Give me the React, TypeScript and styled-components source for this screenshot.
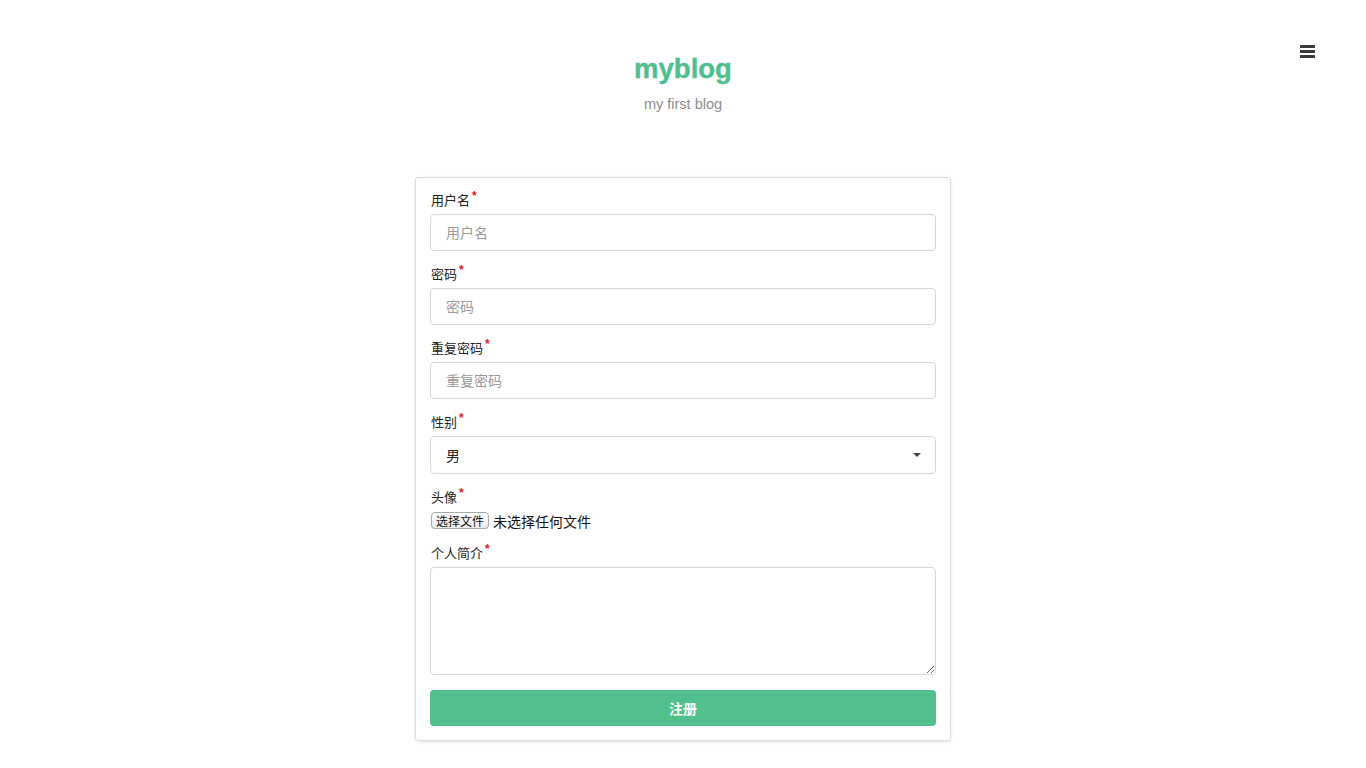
import styled, { createGlobalStyle } from 'styled-components';

const GlobalStyle = createGlobalStyle`
  body {
    margin: 0;
    background: #fff;
    font-family: "Liberation Sans", "Noto Sans CJK SC", sans-serif;
    color: #333;
  }
`;

const fields = [
  { label: '用户名', placeholder: '用户名', type: 'text' },
  { label: '密码', placeholder: '密码', type: 'password' },
  { label: '重复密码', placeholder: '重复密码', type: 'password' },
];

function BarsIcon() {
  return (
    <svg width="15" height="13" viewBox="0 0 15 13" fill="#3a3a3a">
      <rect x="0" y="0" width="15" height="3" rx="0.5" />
      <rect x="0" y="5" width="15" height="3" rx="0.5" />
      <rect x="0" y="10" width="15" height="3" rx="0.5" />
    </svg>
  );
}

export default function App() {
  return (
    <>
      <GlobalStyle />
      <Page>
        <MenuButton aria-label="menu">
          <BarsIcon />
        </MenuButton>

        <Header>
          <Title>myblog</Title>
          <Subtitle>my first blog</Subtitle>
        </Header>

        <Card>
          {fields.map((f) => (
            <Group key={f.label}>
              <Label>
                {f.label}
                <Star>*</Star>
              </Label>
              <Input type="text" placeholder={f.placeholder} />
            </Group>
          ))}

          <Group>
            <Label>
              性别<Star>*</Star>
            </Label>
            <SelectBox>
              <span>男</span>
              <Caret />
            </SelectBox>
          </Group>

          <Group>
            <Label>
              头像<Star>*</Star>
            </Label>
            <FileRow>
              <FileButton>选择文件</FileButton>
              <FileText>未选择任何文件</FileText>
            </FileRow>
          </Group>

          <Group>
            <Label>
              个人简介<Star>*</Star>
            </Label>
            <TextArea />
          </Group>

          <Submit>注册</Submit>
        </Card>
      </Page>
    </>
  );
}

const Page = styled.div`
  position: relative;
  min-height: 768px;
  display: flex;
  flex-direction: column;
  align-items: center;
  padding-top: 50px;
  box-sizing: border-box;
`;

const MenuButton = styled.div`
  position: absolute;
  top: 45px;
  right: 51px;
  display: flex;
`;

const Header = styled.div`
  display: flex;
  flex-direction: column;
  align-items: center;
`;

const Title = styled.h1`
  margin: 0;
  font-family: "Liberation Sans", Arial, sans-serif;
  font-size: 27.5px;
  line-height: 38px;
  font-weight: 700;
  color: #4fc08d;
  -webkit-text-stroke: 0.4px #4fc08d;
`;

const Subtitle = styled.div`
  margin-top: 6px;
  font-size: 14.5px;
  line-height: 20px;
  color: #8c8c8c;
`;

const Card = styled.div`
  margin-top: 63px;
  width: 536px;
  box-sizing: border-box;
  padding: 14px;
  border: 1px solid #dcdcdc;
  border-radius: 3px;
  box-shadow: 0 1px 3px rgba(0, 0, 0, 0.12);
  display: flex;
  flex-direction: column;
`;

const Group = styled.div`
  display: flex;
  flex-direction: column;
  margin-bottom: 15px;
`;

const Label = styled.label`
  font-size: 13px;
  line-height: 18px;
  color: #222;
  margin-bottom: 4px;
  padding-left: 1px;
`;

const Star = styled.sup`
  color: #e02020;
  font-size: 12px;
  font-weight: 700;
  line-height: 0;
  margin-left: 2px;
`;

const Input = styled.input`
  height: 37px;
  box-sizing: border-box;
  border: 1px solid #d6d6d6;
  border-radius: 4px;
  padding: 0 15px;
  font-family: inherit;
  font-size: 14px;
  color: #333;
  outline: none;
  &::placeholder {
    color: #9a9a9a;
  }
`;

const SelectBox = styled.div`
  height: 38px;
  box-sizing: border-box;
  border: 1px solid #d6d6d6;
  border-radius: 4px;
  padding: 0 14px 0 15px;
  display: flex;
  align-items: center;
  justify-content: space-between;
  font-size: 14px;
  color: #222;
`;

const Caret = styled.span`
  width: 0;
  height: 0;
  border-left: 4px solid transparent;
  border-right: 4px solid transparent;
  border-top: 4px solid #444;
`;

const FileRow = styled.div`
  display: flex;
  align-items: center;
  height: 19px;
  gap: 4px;
`;

const FileButton = styled.span`
  height: 17px;
  box-sizing: border-box;
  display: inline-flex;
  align-items: center;
  padding: 0 4px;
  margin-left: 1px;
  font-size: 12px;
  color: #111;
  border: 1px solid #a8a8a8;
  border-radius: 4px;
  background: linear-gradient(#fdfdfd, #ececec);
`;

const FileText = styled.span`
  font-size: 14px;
  color: #111;
`;

const TextArea = styled.textarea`
  height: 108px;
  box-sizing: border-box;
  border: 1px solid #d6d6d6;
  border-radius: 4px;
  padding: 8px 15px;
  font-family: inherit;
  font-size: 14px;
  outline: none;
`;

const Submit = styled.button`
  height: 36px;
  border: none;
  border-radius: 4px;
  background: #51c08d;
  color: #fff;
  font-family: inherit;
  font-size: 14px;
  font-weight: 700;
  cursor: pointer;
`;
